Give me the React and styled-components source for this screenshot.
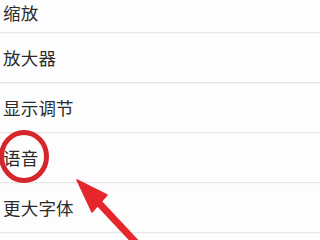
import React from "react";
import styled, { createGlobalStyle } from "styled-components";

const Global = createGlobalStyle`
  html, body { margin: 0; padding: 0; background: #fdfdfd; }
  body { width: 320px; height: 240px; overflow: hidden; }
`;

const Screen = styled.div`
  position: relative;
  width: 320px;
  height: 240px;
  overflow: hidden;
  background: #fdfdfd;
  font-family: "Noto Sans CJK SC", "Noto Sans", sans-serif;
`;

const List = styled.ul`
  list-style: none;
  margin: 0;
  padding: 0;
  display: flex;
  flex-direction: column;
`;

const Row = styled.li`
  box-sizing: border-box;
  height: ${(p) => p.$h}px;
  padding: 0 0 ${(p) => p.$pb || 0}px 3px;
  display: flex;
  align-items: center;
  border-bottom: 1px solid #e5e5e5;
  box-shadow: 0 1px 1px rgba(0, 0, 0, 0.025);
  font-size: 17.5px;
  color: #2b2b2b;
  letter-spacing: 0.2px;
`;

const Overlay = styled.svg`
  position: absolute;
  left: 0;
  top: 0;
  pointer-events: none;
`;

const items = [
  { t: "缩放", h: 33, pb: 7 },
  { t: "放大器", h: 50 },
  { t: "显示调节", h: 50 },
  { t: "语音", h: 50 },
  { t: "更大字体", h: 50 },
];

export default function App() {
  return (
    <Screen>
      <Global />
      <List>
        {items.map((it) => (
          <Row key={it.t} $h={it.h} $pb={it.pb}>
            {it.t}
          </Row>
        ))}
      </List>
      <Overlay width="320" height="240" viewBox="0 0 320 240">
        <ellipse cx="24" cy="156.5" rx="22.5" ry="24" fill="none" stroke="#d5262c" strokeWidth="5" />
        <line x1="97" y1="201" x2="141" y2="248" stroke="#e5272c" strokeWidth="7" />
        <polygon points="77,180 107,195 92,212" fill="#e5272c" stroke="#e5272c" strokeWidth="1.5" strokeLinejoin="round" />
      </Overlay>
    </Screen>
  );
}
